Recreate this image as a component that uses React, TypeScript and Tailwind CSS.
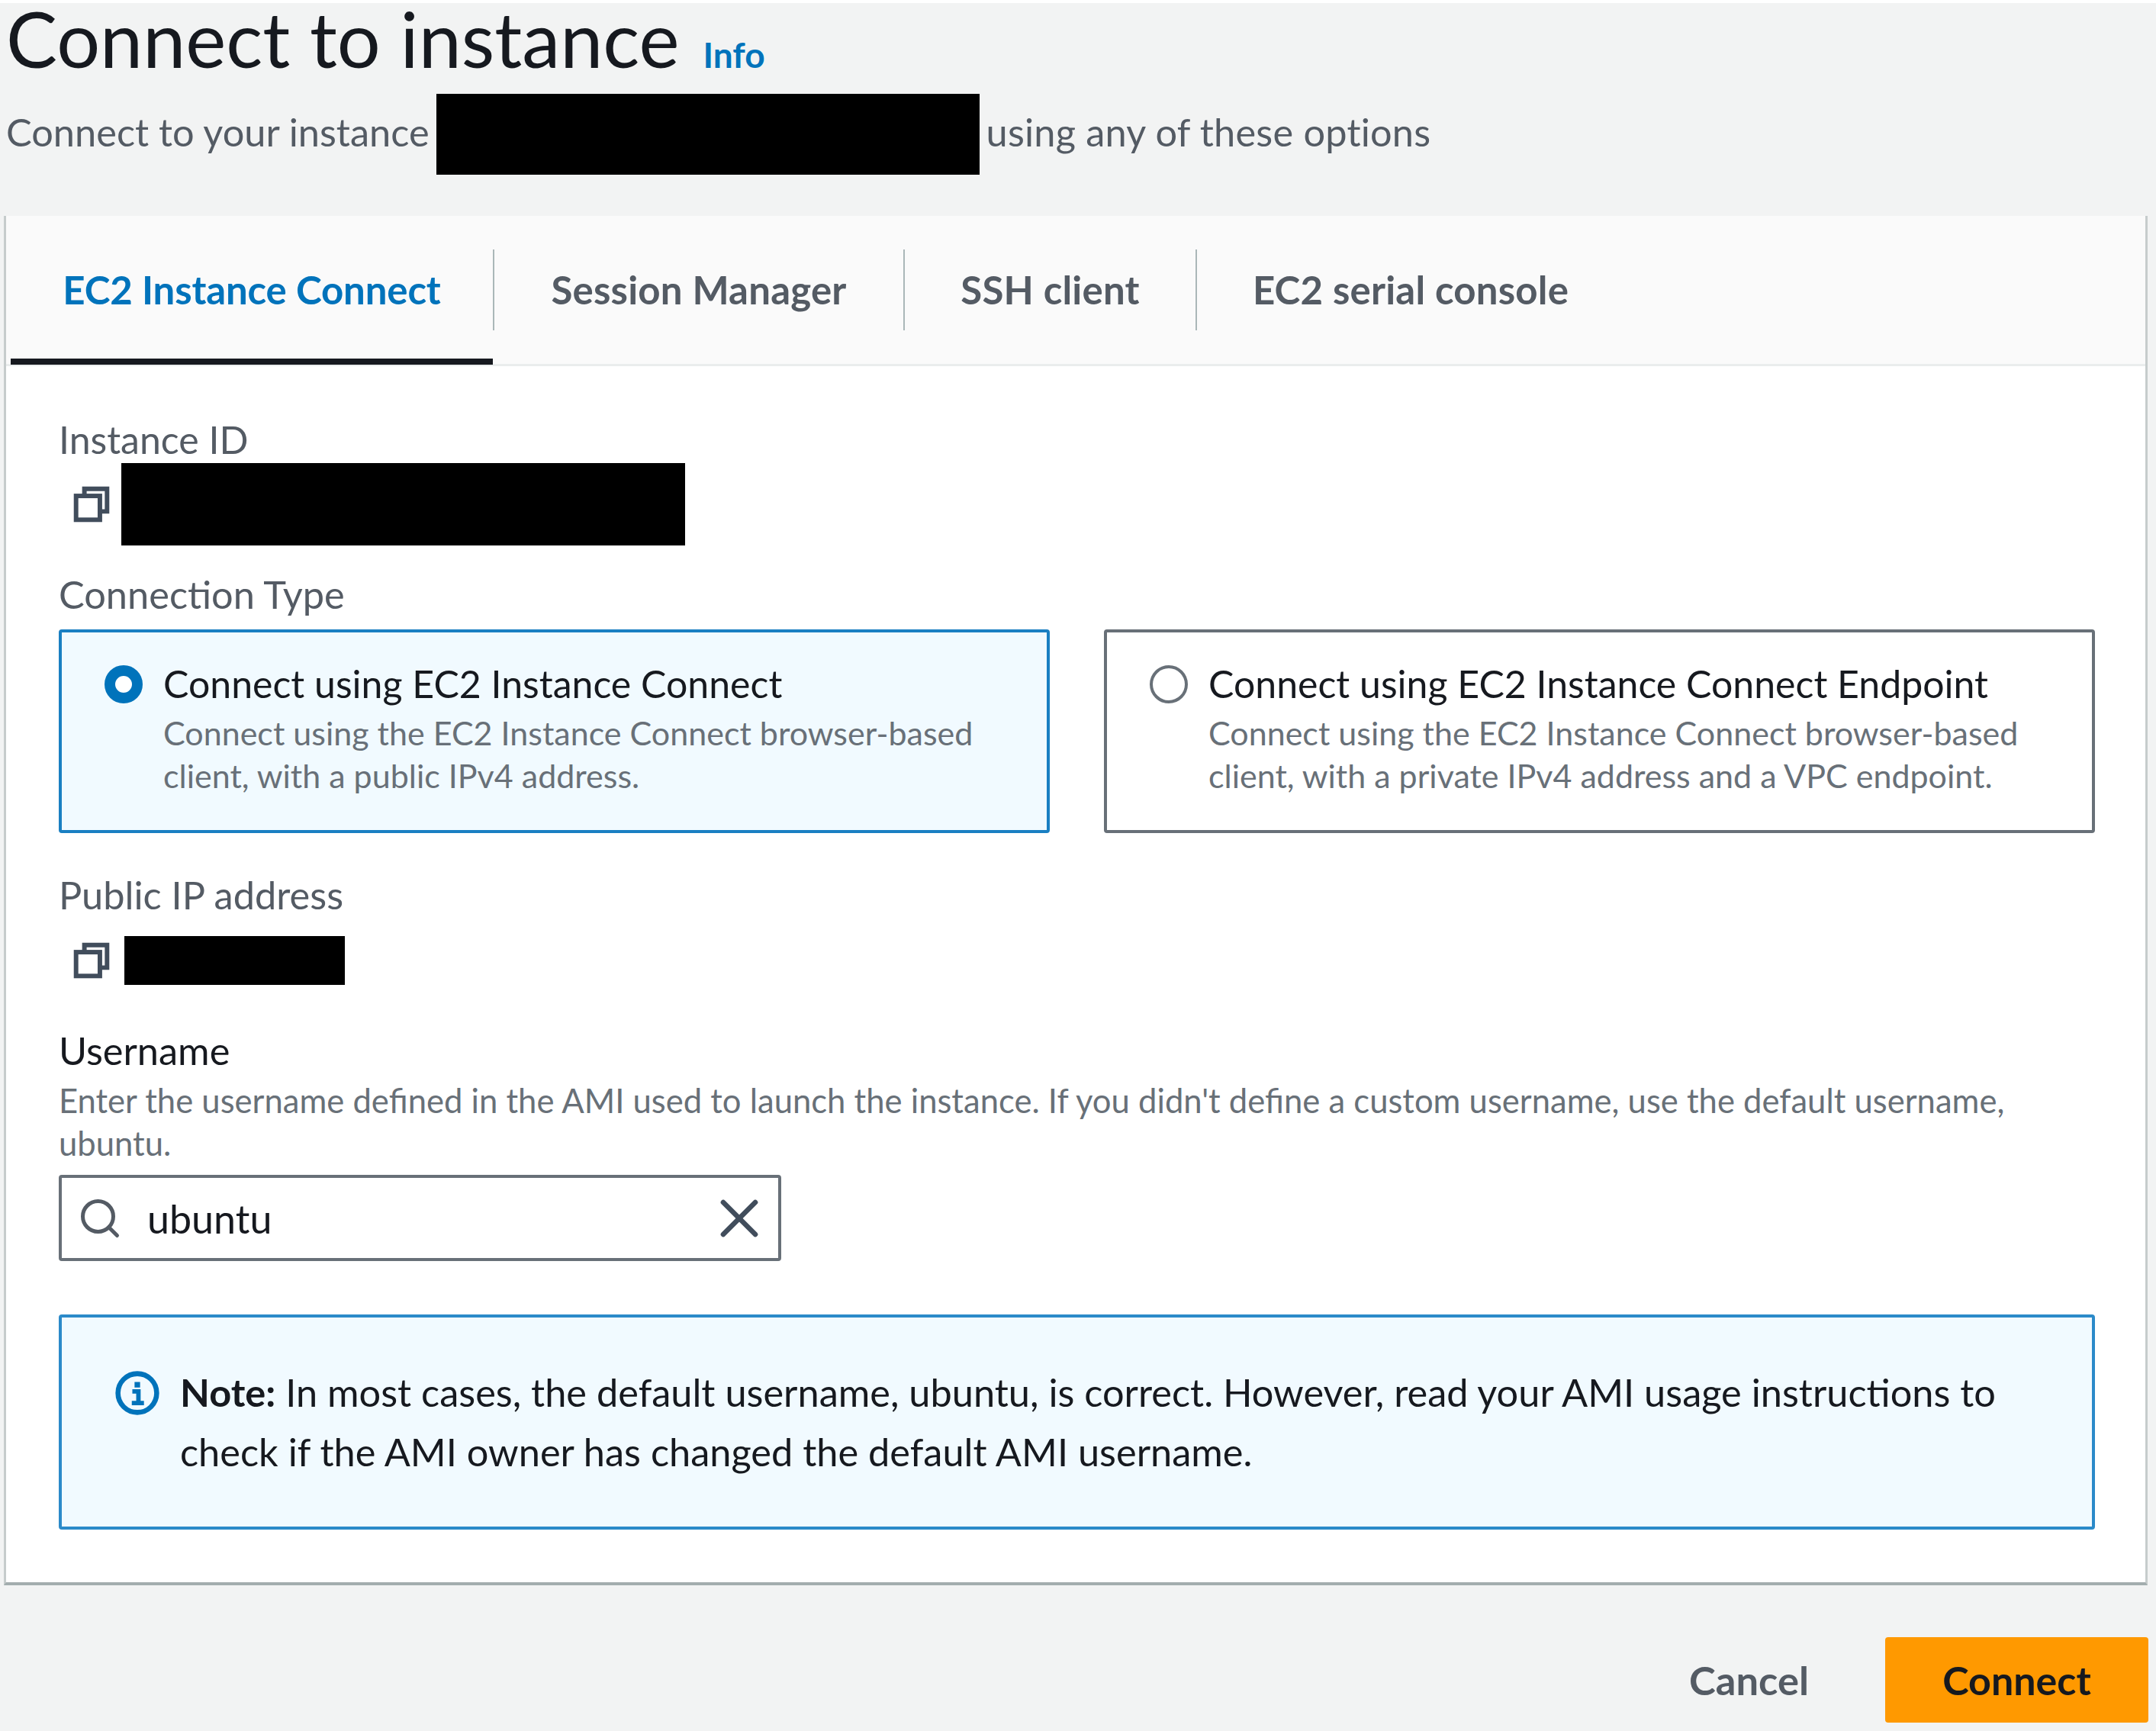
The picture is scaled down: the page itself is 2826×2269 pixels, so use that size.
import { X, Search } from 'lucide-react';

const font = "font-['Lato','Noto_Sans',sans-serif]";

const CopyIcon = () => (
  <svg className="w-[50px] h-[50px] text-[#414d5c]" viewBox="0 0 16 16" fill="none" stroke="currentColor" strokeWidth="1.9">
    <path d="M5 4V1.5h9.5V11H11.5" />
    <rect x="1.5" y="4.5" width="10" height="10" />
  </svg>
);

const InfoIcon = () => (
  <svg className="w-[58px] h-[58px] text-[#0073bb] mt-[11px] shrink-0" viewBox="0 0 16 16" fill="none">
    <circle cx="8" cy="8" r="7" stroke="currentColor" strokeWidth="1.8" />
    <path d="M8 4v2" stroke="currentColor" strokeWidth="2" />
    <path d="M6.2 7.4H8.4V11.4M6 11.6h4.4" stroke="currentColor" strokeWidth="1.6" />
  </svg>
);

const Tab = ({ label, active, width }: { label: string; active?: boolean; width: string }) => (
  <div className={`${width} h-full flex items-center justify-center relative text-[51px] font-bold ${active ? 'text-[#0073bb] tracking-[-0.15px]' : 'text-[#545b64] tracking-[0.2px]'}`}>
    {label}
    {active && <div className="absolute left-0 right-0 -bottom-[1px] h-[8px] bg-[#16191f]" />}
  </div>
);

const Divider = () => <div className="w-[2px] h-[106px] bg-[#aab7b8]" />;

const OptionCard = ({ selected, title, lines }: { selected?: boolean; title: string; lines: string[] }) => (
  <div className={`w-[1299px] h-[267px] rounded-[4px] border-[4px] flex pl-[56px] pt-[37px] ${selected ? 'border-[#1a7fc2] bg-[#f1faff]' : 'border-[#687078] bg-white'}`}>
    {selected ? (
      <div className="mt-[6px] w-[50px] h-[50px] rounded-full border-[14px] border-[#0073bb] bg-white shrink-0" />
    ) : (
      <div className="mt-[6px] w-[50px] h-[50px] rounded-full border-[4px] border-[#687078] bg-white shrink-0" />
    )}
    <div className="ml-[27px]">
      <div className="text-[50px] leading-[60px] text-[#16191f]">{title}</div>
      <div className="mt-[7px] text-[43px] leading-[56px] text-[#687078]">
        {lines.map((line) => (
          <div key={line}>{line}</div>
        ))}
      </div>
    </div>
  </div>
);

export default function App() {
  return (
    <div className={`${font} w-[2826px] h-[2269px] bg-[#f2f3f3] overflow-hidden`}>
      <div className="h-[4px] bg-white" />
      <div className="pl-[8px] h-[279px]">
        <div className="flex items-baseline h-[119px]">
          <h1 className="text-[100.5px] leading-[92px] font-normal text-[#16191f]">Connect to instance</h1>
          <a className="ml-[31px] text-[46px] font-bold text-[#0073bb]">Info</a>
        </div>
        <div className="flex items-center h-[106px] text-[50.5px] text-[#545b64]">
          <span className="mb-[7px]">Connect to your instance</span>
          <div className="ml-[9px] w-[712px] h-[106px] bg-black" />
          <span className="ml-[9px] mb-[7px] tracking-[0.2px]">using any of these options</span>
        </div>
      </div>

      <div className="ml-[5px] w-[2810px] h-[1795px] bg-white border-l-[3px] border-r-[3px] border-b-[4px] border-l-[#c6cccc] border-r-[#c6cccc] border-b-[#a3adae]">
        <div className="h-[197px] bg-[#fafafa] border-b-[3px] border-[#eaeded] flex items-center pl-[6px]">
          <Tab label="EC2 Instance Connect" active width="w-[632px]" />
          <Divider />
          <Tab label="Session Manager" width="w-[536px]" />
          <Divider />
          <Tab label="SSH client" width="w-[381px]" />
          <Divider />
          <Tab label="EC2 serial console" width="w-[560px]" />
        </div>

        <div className="pl-[69px] pr-[66px]">
          <div className="mt-[66px] text-[50px] leading-[60px] text-[#545b64]">Instance ID</div>
          <div className="flex items-center h-[108px] mt-[1px] pl-[18px]">
            <CopyIcon />
            <div className="ml-[14px] w-[739px] h-[108px] bg-black" />
          </div>

          <div className="mt-[34px] text-[50.5px] leading-[60px] text-[#545b64]">Connection Type</div>
          <div className="mt-[16px] flex justify-between">
            <OptionCard selected title="Connect using EC2 Instance Connect" lines={['Connect using the EC2 Instance Connect browser-based', 'client, with a public IPv4 address.']} />
            <OptionCard title="Connect using EC2 Instance Connect Endpoint" lines={['Connect using the EC2 Instance Connect browser-based', 'client, with a private IPv4 address and a VPC endpoint.']} />
          </div>

          <div className="mt-[51px] text-[50.5px] leading-[60px] text-[#545b64]">Public IP address</div>
          <div className="flex items-center h-[64px] mt-[24px] pl-[18px]">
            <CopyIcon />
            <div className="ml-[18px] w-[289px] h-[64px] bg-black" />
          </div>

          <div className="mt-[56px] text-[50.5px] leading-[60px] text-[#16191f]">Username</div>
          <div className="mt-[7px] text-[43.6px] leading-[56px] text-[#687078]">
            Enter the username defined in the AMI used to launch the instance. If you didn't define a custom username, use the default username, ubuntu.
          </div>
          <div className="mt-[14px] w-[947px] h-[113px] rounded-[4px] border-[4px] border-[#687078] bg-white flex items-center pl-[20px] pr-[9px]">
            <Search className="w-[60px] h-[60px] text-[#545b64]" strokeWidth={2} />
            <span className="ml-[32px] text-[52px] text-[#16191f]">ubuntu</span>
            <X className="ml-auto w-[84px] h-[84px] text-[#414d5c]" strokeWidth={1.9} />
          </div>

          <div className="mt-[70px] h-[282px] rounded-[4px] border-[4px] border-[#2b8ac9] bg-[#f1faff] flex pl-[70px] pt-[59px]">
            <InfoIcon />
            <div className="ml-[27px] text-[50.5px] leading-[78px] text-[#16191f]">
              <b>Note:</b> In most cases, the default username, ubuntu, is correct. However, read your AMI usage instructions to
              <br />
              check if the AMI owner has changed the default AMI username.
            </div>
          </div>
        </div>
      </div>

      <div className="flex items-center justify-end pr-[10px] mt-[68px]">
        <span className="text-[52.5px] font-bold text-[#545b64]">Cancel</span>
        <div className="ml-[100px] w-[345px] h-[112px] rounded-[4px] bg-[#ff9900] flex items-center justify-center text-[52px] font-bold text-[#16191f]">Connect</div>
      </div>
    </div>
  );
}
